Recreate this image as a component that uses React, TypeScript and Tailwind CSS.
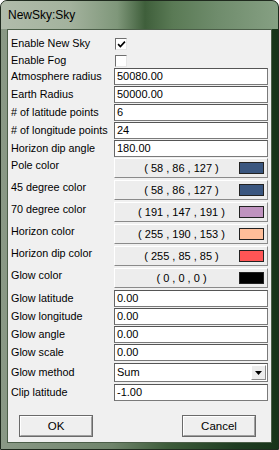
import React from "react";

const font = { fontFamily: '"Liberation Sans", Arial, sans-serif' };

function Label({ children, top }: { children: React.ReactNode; top?: boolean }) {
  return (
    <div
      className={`w-[103px] shrink-0 text-[10.8px] leading-[13px] text-black whitespace-nowrap ${top ? "pt-[1px]" : ""}`}
    >
      {children}
    </div>
  );
}

function Field({ label, value, mt }: { label: string; value: string; mt: string }) {
  return (
    <div className={`flex items-center h-[17px] ${mt}`}>
      <Label>{label}</Label>
      <div className="w-[154px] h-[17px] bg-white border border-[#7a7a7a] border-t-[#555] border-l-[#666] flex items-center pl-[2px] text-[11px] leading-[13px] text-black">
        {value}
      </div>
    </div>
  );
}

function Check({ label, checked, mt }: { label: string; checked: boolean; mt: string }) {
  return (
    <div className={`flex items-center h-[13px] ${mt}`}>
      <Label>{label}</Label>
      <div className="ml-[1px] w-[12px] h-[12px] bg-white border border-[#e6e6e6] border-t-[#6f6f6f] border-l-[#6f6f6f] relative">
        {checked && (
          <svg viewBox="0 0 10 10" className="absolute left-[1px] top-[1px] w-[9px] h-[9px]">
            <path d="M1.2 4.6 L3.8 7.3 L8.8 1.8" stroke="#000" strokeWidth="1.8" fill="none" />
          </svg>
        )}
      </div>
    </div>
  );
}

function ColorRow({
  label,
  text,
  color,
  mt,
}: {
  label: string;
  text: string;
  color: string;
  mt: string;
}) {
  return (
    <div className={`flex items-start h-[20px] ${mt}`}>
      <Label top>{label}</Label>
      <div className="w-[154px] h-[20px] bg-[#ededed] border border-t-white border-l-white border-b-[#8a8a8a] border-r-[#8a8a8a] flex items-center">
        <div className="flex-1 text-center pl-[9px] text-[11px] leading-[13px] text-black whitespace-pre">
          {text}
        </div>
        <div
          className="w-[25px] h-[12px] border border-[#222] mr-[3px]"
          style={{ backgroundColor: color }}
        />
      </div>
    </div>
  );
}

function WinButton({ children }: { children: React.ReactNode }) {
  return (
    <div className="w-[74px] h-[22px] border border-[#6a6a6a] bg-[#efefef] flex">
      <div className="flex-1 border border-t-white border-l-white border-b-[#a0a0a0] border-r-[#a0a0a0] flex items-center justify-center text-[11.5px] leading-[13px] text-black">
        {children}
      </div>
    </div>
  );
}

export default function App() {
  return (
    <div
      className="w-[279px] h-[450px] flex flex-col rounded-t-[7px] overflow-hidden border border-[#1f2a1e] bg-[linear-gradient(90deg,#8a9986_0%,#6f846b_40%,#3d5c3a_60%,#1f3d22_85%,#183419_100%)]"
      style={font}
    >
      <div className="h-[28px] shrink-0 flex items-center pl-[7px] bg-[linear-gradient(90deg,#b1bcab_0%,#a3b29d_25%,#7f977a_42%,#3f5f3b_52%,#5a7a55_62%,#6f8c6c_78%,#86a083_100%)]">
        <span className="text-[12px] text-black leading-none" style={{ fontFamily: '"Liberation Sans", Arial, sans-serif' }}>
          NewSky:Sky
        </span>
      </div>
      <div className="flex-1 flex px-[6px] pb-[6px]">
        <div className="flex-1 bg-[#f0f0f0] border border-[#4b5e48] flex flex-col pl-[3px] pr-[3px] pt-[7px]">
          <Check label="Enable New Sky" checked mt="" />
          <Check label="Enable Fog" checked={false} mt="mt-[4px]" />
          <Field label="Atmosphere radius" value="50080.00" mt="mt-[1px]" />
          <Field label="Earth Radius" value="50000.00" mt="mt-[1px]" />
          <Field label="# of latitude points" value="6" mt="mt-[1px]" />
          <Field label="# of longitude points" value="24" mt="mt-[1px]" />
          <Field label="Horizon dip angle" value="180.00" mt="mt-[1px]" />
          <ColorRow label="Pole color" text="( 58 , 86 , 127 )" color="rgb(58,86,127)" mt="mt-[1px]" />
          <ColorRow label="45 degree color" text="( 58 , 86 , 127 )" color="rgb(58,86,127)" mt="mt-[2px]" />
          <ColorRow label="70 degree color" text="( 191 , 147 , 191 )" color="rgb(191,147,191)" mt="mt-[2px]" />
          <ColorRow label="Horizon color" text="( 255 , 190 , 153 )" color="rgb(255,190,153)" mt="mt-[2px]" />
          <ColorRow label="Horizon dip color" text="( 255 , 85 , 85 )" color="rgb(255,85,85)" mt="mt-[2px]" />
          <ColorRow label="Glow color" text="( 0 , 0 , 0 )" color="rgb(0,0,0)" mt="mt-[2px]" />
          <Field label="Glow latitude" value="0.00" mt="mt-[2px]" />
          <Field label="Glow longitude" value="0.00" mt="mt-[1px]" />
          <Field label="Glow angle" value="0.00" mt="mt-[1px]" />
          <Field label="Glow scale" value="0.00" mt="mt-[1px]" />
          <div className="flex items-center h-[19px] mt-[2px]">
            <Label>Glow method</Label>
            <div className="w-[154px] h-[19px] bg-white border border-[#7a7a7a] border-t-[#555] border-l-[#666] flex items-center">
              <div className="flex-1 pl-[2px] text-[11px] leading-[13px] text-black">Sum</div>
              <div className="w-[15px] h-[15px] mr-[1px] bg-[#ececec] border border-t-white border-l-white border-b-[#8a8a8a] border-r-[#8a8a8a] flex items-center justify-center">
                <svg viewBox="0 0 7 4" className="w-[7px] h-[4px]">
                  <path d="M0 0 L7 0 L3.5 4 Z" fill="#000" />
                </svg>
              </div>
            </div>
          </div>
          <Field label="Clip latitude" value="-1.00" mt="mt-[2px]" />
          <div className="flex justify-between mt-[14px] pl-[8px] pr-[12px]">
            <WinButton>OK</WinButton>
            <WinButton>Cancel</WinButton>
          </div>
        </div>
      </div>
    </div>
  );
}
